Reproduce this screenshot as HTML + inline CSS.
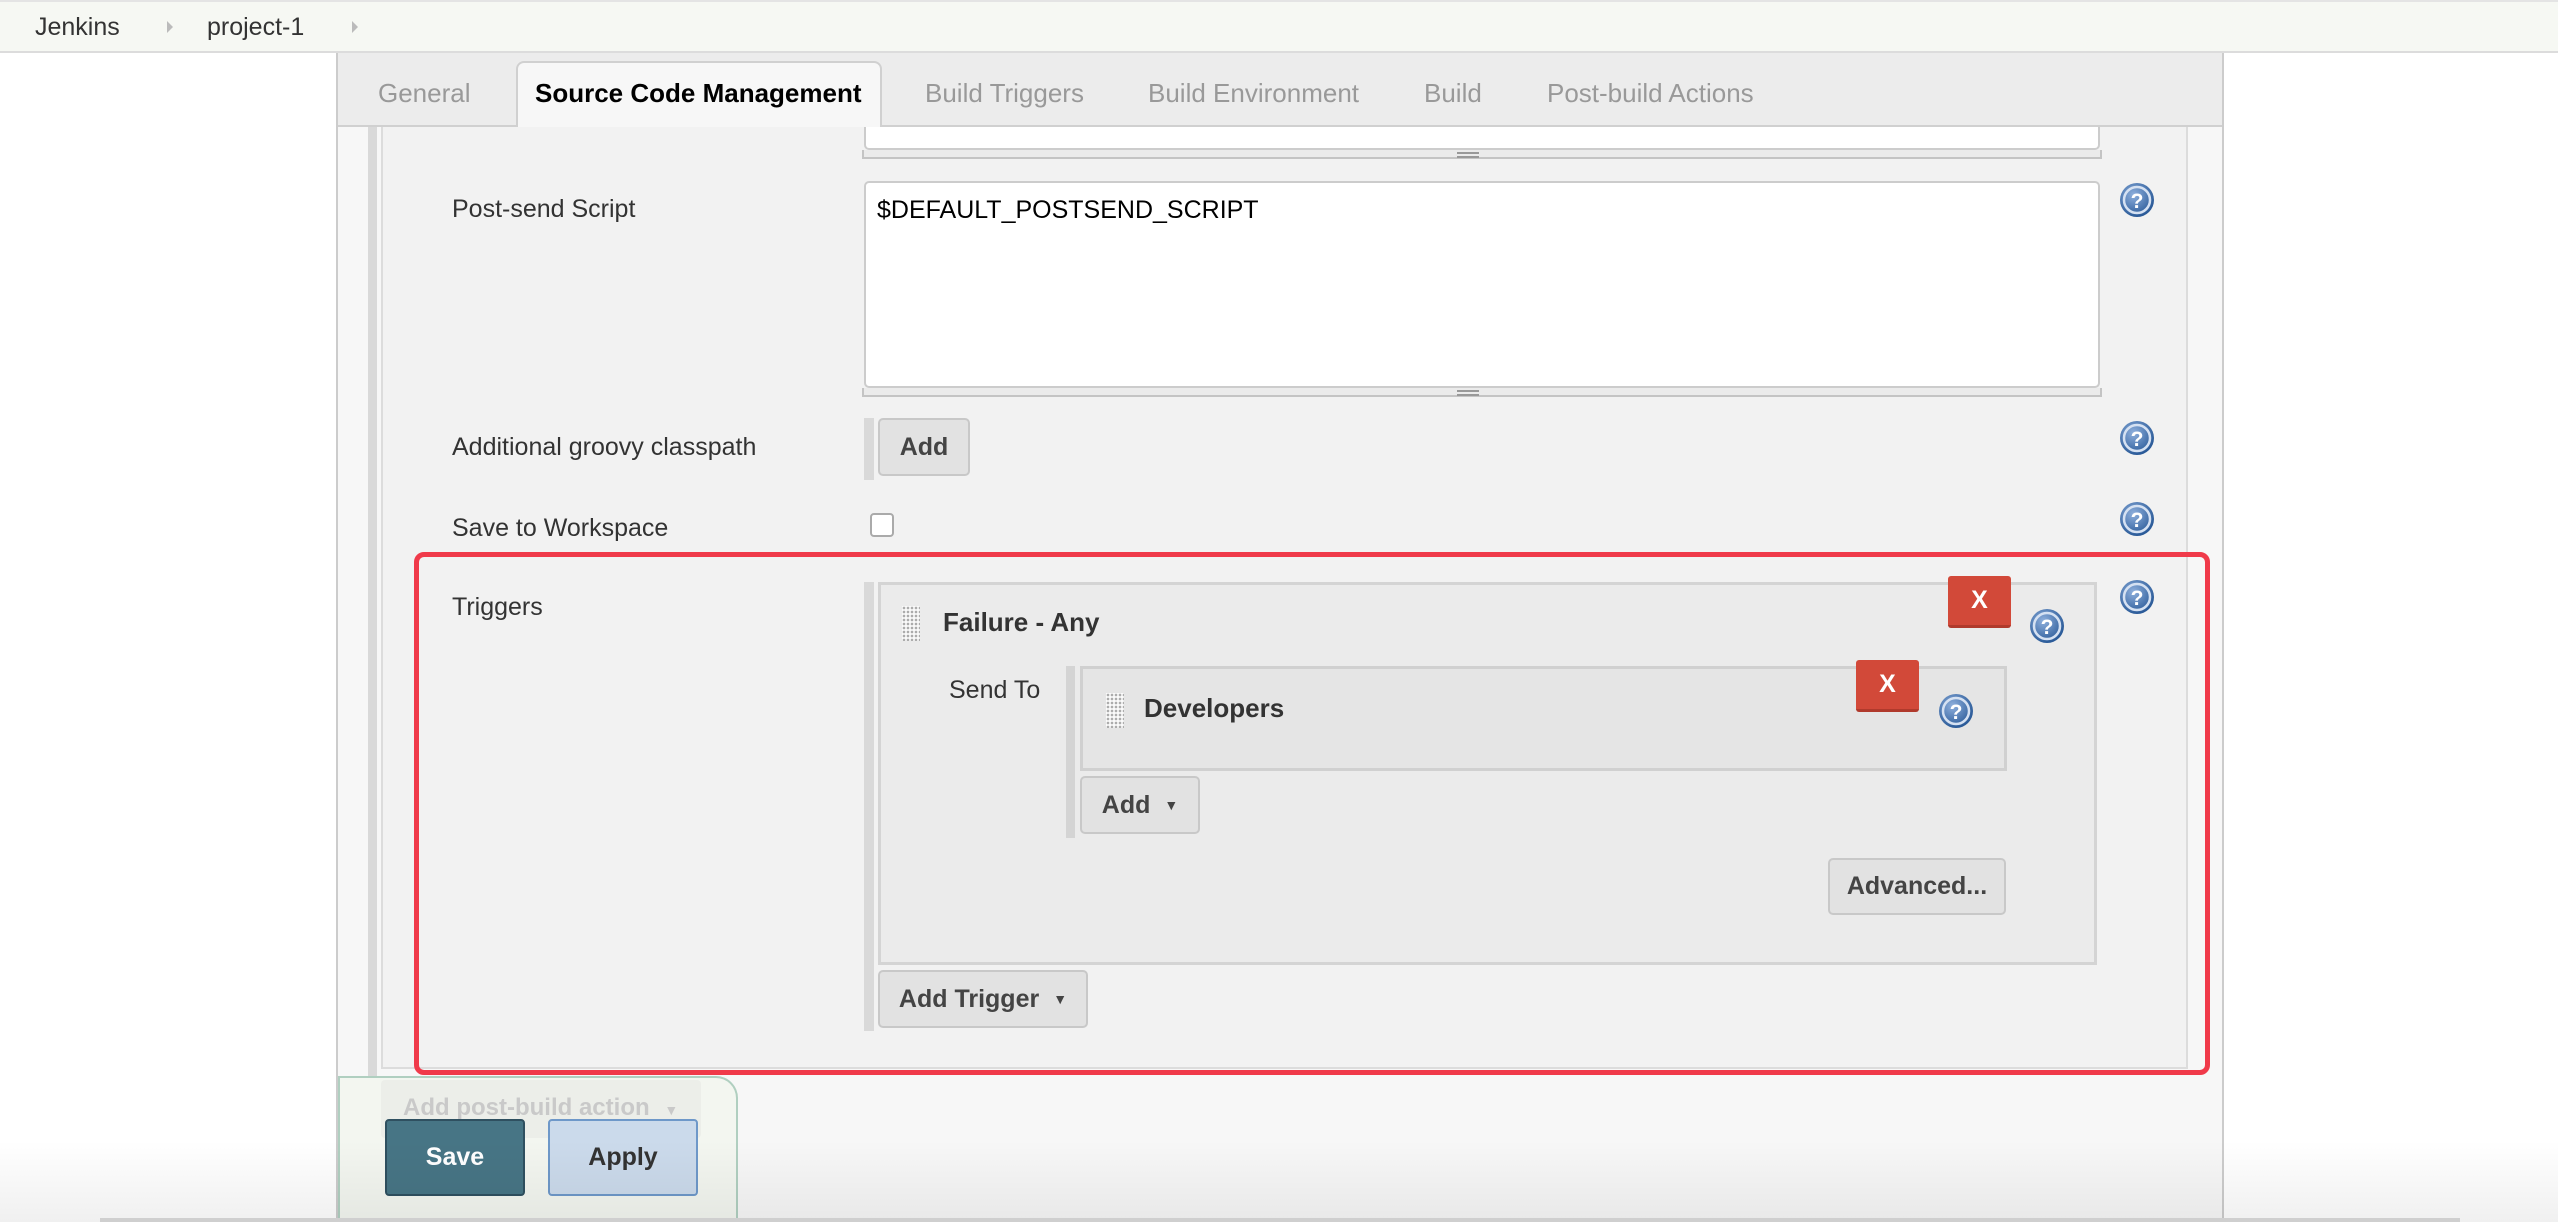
<!DOCTYPE html>
<html><head><meta charset="utf-8"><style>
*{box-sizing:border-box;margin:0;padding:0}
body{width:2558px;height:1222px;overflow:hidden;background:#fff;font-family:"Liberation Sans",Arial,sans-serif;position:relative;color:#333}
.a{position:absolute}
.lbl{position:absolute;font-size:25px;color:#333}
.btn{position:absolute;background:#e2e2e2;border:2px solid #c8c8c8;border-radius:5px;font-weight:bold;font-size:25px;color:#444;display:flex;align-items:center;justify-content:center}
.x{position:absolute;background:#d24939;border-bottom:3px solid #b03a2c;border-radius:3px;color:#fff;font-size:25px;font-weight:bold;display:flex;align-items:center;justify-content:center}
.bar{position:absolute;background:#d9d9d9}
.drag{position:absolute;width:18px;background-image:radial-gradient(circle,#aaa 1px,transparent 1.6px);background-size:4px 4px;background-color:#fafafa}
.tab{position:absolute;top:78px;font-size:26px;color:#999}
</style></head><body>
<!-- breadcrumb -->
<div class="a" style="left:0;top:0;width:2558px;height:53px;background:#f6f8f3;border-top:2px solid #e4e4e4;border-bottom:2px solid #dcdcdc"></div>
<div class="a" style="left:35px;top:13px;font-size:25px;color:#333">Jenkins</div>
<div class="a" style="left:167px;top:21px;width:0;height:0;border-left:6px solid #bbb;border-top:6px solid transparent;border-bottom:6px solid transparent"></div>
<div class="a" style="left:207px;top:13px;font-size:25px;color:#333">project-1</div>
<div class="a" style="left:352px;top:21px;width:0;height:0;border-left:6px solid #bbb;border-top:6px solid transparent;border-bottom:6px solid transparent"></div>

<!-- main panel -->
<div class="a" style="left:336px;top:53px;width:1888px;height:1169px;background:#f7f7f7;border-left:2px solid #ccc;border-right:2px solid #ccc"></div>
<div class="a" style="left:338px;top:53px;width:1884px;height:74px;background:#ececec;border-bottom:2px solid #d0d0d0"></div>
<div class="a" style="left:516px;top:61px;width:366px;height:68px;background:#f7f7f7;border:2px solid #d0d0d0;border-bottom:none;border-radius:8px 8px 0 0"></div>
<div class="tab" style="left:378px">General</div>
<div class="tab" style="left:535px;color:#000;font-weight:bold">Source Code Management</div>
<div class="tab" style="left:925px">Build Triggers</div>
<div class="tab" style="left:1148px">Build Environment</div>
<div class="tab" style="left:1424px">Build</div>
<div class="tab" style="left:1547px">Post-build Actions</div>

<!-- content -->
<div class="a" style="left:381px;top:127px;width:1807px;height:942px;background:#f2f2f2;border-left:2px solid #dcdcdc;border-right:2px solid #dcdcdc;border-bottom:2px solid #dcdcdc"></div>
<div class="bar" style="left:368px;top:127px;width:9px;height:1010px"></div>

<!-- top textarea -->
<div class="a" style="left:864px;top:127px;width:1236px;height:23px;background:#fff;border:2px solid #ccc;border-top:none;border-radius:0 0 5px 5px"></div>
<div class="a" style="left:862px;top:150px;width:1240px;height:9px;background:#ebebeb;border:2px solid #c4c4c4;border-top:none"></div>
<div class="a" style="left:1457px;top:152px;width:22px;height:2px;background:#999;box-shadow:0 4px 0 #999"></div>

<div class="lbl" style="left:452px;top:195px">Post-send Script</div>
<div class="a" style="left:864px;top:181px;width:1236px;height:207px;background:#fff;border:2px solid #ccc;border-radius:5px"></div>
<div class="a" style="left:877px;top:196px;font-size:25px;color:#000">$DEFAULT_POSTSEND_SCRIPT</div>
<div class="a" style="left:862px;top:388px;width:1240px;height:9px;background:#ebebeb;border:2px solid #c4c4c4;border-top:none"></div>
<div class="a" style="left:1457px;top:390px;width:22px;height:2px;background:#999;box-shadow:0 4px 0 #999"></div>

<div class="lbl" style="left:452px;top:433px">Additional groovy classpath</div>
<div class="bar" style="left:864px;top:418px;width:10px;height:62px"></div>
<div class="btn" style="left:878px;top:418px;width:92px;height:58px">Add</div>

<div class="lbl" style="left:452px;top:514px">Save to Workspace</div>
<div class="a" style="left:870px;top:513px;width:24px;height:24px;background:#fff;border:2px solid #aaa;border-radius:4px"></div>

<div class="lbl" style="left:452px;top:593px">Triggers</div>
<div class="bar" style="left:864px;top:582px;width:10px;height:449px"></div>
<div class="a" style="left:878px;top:582px;width:1219px;height:383px;background:#ebebeb;border:3px solid #d4d4d4"></div>
<div class="drag" style="left:902px;top:606px;height:35px"></div>
<div class="a" style="left:943px;top:607px;font-size:26px;font-weight:bold;color:#333">Failure - Any</div>
<div class="x" style="left:1948px;top:576px;width:63px;height:52px">X</div>
<div class="lbl" style="left:949px;top:676px">Send To</div>
<div class="bar" style="left:1066px;top:666px;width:9px;height:172px;background:#d4d4d4"></div>
<div class="a" style="left:1080px;top:666px;width:927px;height:105px;background:#e5e5e5;border:3px solid #d0d0d0"></div>
<div class="drag" style="left:1106px;top:693px;height:35px"></div>
<div class="a" style="left:1144px;top:693px;font-size:26px;font-weight:bold;color:#333">Developers</div>
<div class="x" style="left:1856px;top:660px;width:63px;height:52px">X</div>
<div class="btn" style="left:1080px;top:776px;width:120px;height:58px">Add<span style="font-size:14px;margin-left:14px">▼</span></div>
<div class="btn" style="left:1828px;top:858px;width:178px;height:57px">Advanced...</div>
<div class="btn" style="left:878px;top:970px;width:210px;height:58px">Add Trigger<span style="font-size:14px;margin-left:14px">▼</span></div>

<!-- help icons -->
<svg class="a" style="left:0;top:0" width="2558" height="1222">
<defs><radialGradient id="g" cx="40%" cy="35%" r="65%"><stop offset="0" stop-color="#8fb0dd"/><stop offset="1" stop-color="#2a5a98"/></radialGradient>
<g id="h"><circle r="17" fill="url(#g)"/><circle r="13" fill="none" stroke="#d5e1f2" stroke-width="2.5"/><text y="8" text-anchor="middle" font-family="Liberation Sans" font-weight="bold" font-size="21" fill="#fff">?</text></g></defs>
<use href="#h" x="2137" y="200"/>
<use href="#h" x="2137" y="438"/>
<use href="#h" x="2137" y="519"/>
<use href="#h" x="2137" y="597"/>
<use href="#h" x="2047" y="626"/>
<use href="#h" x="1956" y="711"/>
</svg>

<!-- red highlight -->
<div class="a" style="left:414px;top:552px;width:1796px;height:523px;border:5px solid #f03a4a;border-radius:10px"></div>

<!-- bottom bar -->
<div class="a" style="left:338px;top:1076px;width:400px;height:146px;background:#f3f6f0;border:2px solid #b0cfc0;border-bottom:none;border-radius:0 22px 0 0"></div>
<div class="a" style="left:381px;top:1080px;width:320px;height:58px;background:#eceee9;border-radius:4px;color:#c9c9c9;font-size:24px;font-weight:bold;padding:14px 0 0 22px">Add post-build action <span style="font-size:14px;margin-left:8px">▼</span></div>
<div class="a" style="left:385px;top:1119px;width:140px;height:77px;background:#477585;border:2px solid #2f5060;border-radius:4px;color:#fff;font-weight:bold;font-size:25px;display:flex;align-items:center;justify-content:center">Save</div>
<div class="a" style="left:548px;top:1119px;width:150px;height:77px;background:#cbdaeb;border:2px solid #6e98c9;border-radius:4px;color:#333;font-weight:bold;font-size:25px;display:flex;align-items:center;justify-content:center">Apply</div>
<div class="a" style="left:0;top:1140px;width:2558px;height:82px;background:linear-gradient(rgba(0,0,0,0),rgba(0,0,0,0.06));pointer-events:none"></div>
<div class="a" style="left:100px;top:1218px;width:2360px;height:4px;background:#cfcfcf"></div>
</body></html>
